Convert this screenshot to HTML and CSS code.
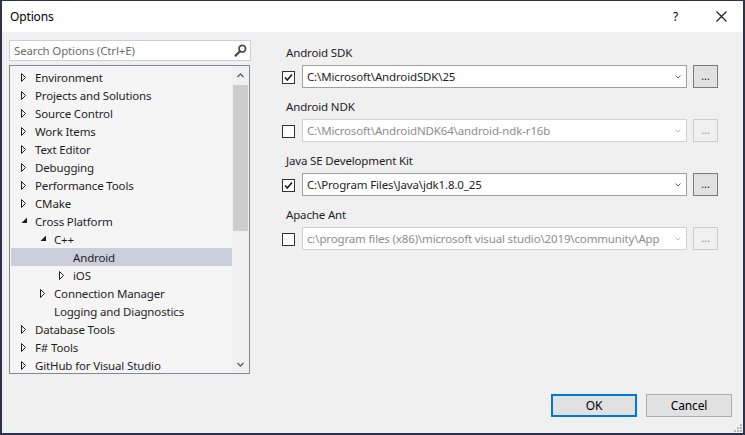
FILE: index.html
```html
<!DOCTYPE html>
<html>
<head>
<meta charset="utf-8">
<link rel="stylesheet" href="styles.css">
</head>
<body>
<div class="window">
  <div class="titlebar">
    <span class="title">Options</span>
    <span class="help">?</span>
    <span class="close"><svg width="11" height="11" viewBox="0 0 11 11"><path d="M0.5 0.5 L10.5 10.5 M10.5 0.5 L0.5 10.5" stroke="#1a1a1a" stroke-width="1.1" fill="none"/></svg></span>
  </div>
  <div class="content">
    <div class="left">
      <div class="search">
        <span class="placeholder">Search Options (Ctrl+E)</span>
        <svg class="search-icon" width="13" height="13" viewBox="0 0 13 13"><circle cx="8.3" cy="4.7" r="3.3" stroke="#4a4a4a" stroke-width="1.7" fill="none"/><path d="M6 7.2 L1.6 11.6" stroke="#4a4a4a" stroke-width="2.2" stroke-linecap="round"/></svg>
      </div>
      <div class="tree">
        <div class="rows">
          <div class="row l0"><svg class="exp" width="6" height="9" viewBox="0 0 6 9"><path d="M0.5 0.5 L4.5 4.5 L0.5 8.5 Z" fill="none" stroke="#1e1e1e"/></svg><span>Environment</span></div>
          <div class="row l0"><svg class="exp" width="6" height="9" viewBox="0 0 6 9"><path d="M0.5 0.5 L4.5 4.5 L0.5 8.5 Z" fill="none" stroke="#1e1e1e"/></svg><span>Projects and Solutions</span></div>
          <div class="row l0"><svg class="exp" width="6" height="9" viewBox="0 0 6 9"><path d="M0.5 0.5 L4.5 4.5 L0.5 8.5 Z" fill="none" stroke="#1e1e1e"/></svg><span>Source Control</span></div>
          <div class="row l0"><svg class="exp" width="6" height="9" viewBox="0 0 6 9"><path d="M0.5 0.5 L4.5 4.5 L0.5 8.5 Z" fill="none" stroke="#1e1e1e"/></svg><span>Work Items</span></div>
          <div class="row l0"><svg class="exp" width="6" height="9" viewBox="0 0 6 9"><path d="M0.5 0.5 L4.5 4.5 L0.5 8.5 Z" fill="none" stroke="#1e1e1e"/></svg><span>Text Editor</span></div>
          <div class="row l0"><svg class="exp" width="6" height="9" viewBox="0 0 6 9"><path d="M0.5 0.5 L4.5 4.5 L0.5 8.5 Z" fill="none" stroke="#1e1e1e"/></svg><span>Debugging</span></div>
          <div class="row l0"><svg class="exp" width="6" height="9" viewBox="0 0 6 9"><path d="M0.5 0.5 L4.5 4.5 L0.5 8.5 Z" fill="none" stroke="#1e1e1e"/></svg><span>Performance Tools</span></div>
          <div class="row l0"><svg class="exp" width="6" height="9" viewBox="0 0 6 9"><path d="M0.5 0.5 L4.5 4.5 L0.5 8.5 Z" fill="none" stroke="#1e1e1e"/></svg><span>CMake</span></div>
          <div class="row l0"><svg class="exp" width="6" height="9" viewBox="0 0 6 9"><path d="M6 0.5 L6 6 L0.5 6 Z" fill="#1e1e1e"/></svg><span>Cross Platform</span></div>
          <div class="row l1"><svg class="exp" width="6" height="9" viewBox="0 0 6 9"><path d="M6 0.5 L6 6 L0.5 6 Z" fill="#1e1e1e"/></svg><span>C++</span></div>
          <div class="row l2 selected"><span class="noexp"></span><span>Android</span></div>
          <div class="row l2"><svg class="exp" width="6" height="9" viewBox="0 0 6 9"><path d="M0.5 0.5 L4.5 4.5 L0.5 8.5 Z" fill="none" stroke="#1e1e1e"/></svg><span>iOS</span></div>
          <div class="row l1"><svg class="exp" width="6" height="9" viewBox="0 0 6 9"><path d="M0.5 0.5 L4.5 4.5 L0.5 8.5 Z" fill="none" stroke="#1e1e1e"/></svg><span>Connection Manager</span></div>
          <div class="row l1"><span class="noexp"></span><span>Logging and Diagnostics</span></div>
          <div class="row l0"><svg class="exp" width="6" height="9" viewBox="0 0 6 9"><path d="M0.5 0.5 L4.5 4.5 L0.5 8.5 Z" fill="none" stroke="#1e1e1e"/></svg><span>Database Tools</span></div>
          <div class="row l0"><svg class="exp" width="6" height="9" viewBox="0 0 6 9"><path d="M0.5 0.5 L4.5 4.5 L0.5 8.5 Z" fill="none" stroke="#1e1e1e"/></svg><span>F# Tools</span></div>
          <div class="row l0"><svg class="exp" width="6" height="9" viewBox="0 0 6 9"><path d="M0.5 0.5 L4.5 4.5 L0.5 8.5 Z" fill="none" stroke="#1e1e1e"/></svg><span>GitHub for Visual Studio</span></div>
        </div>
        <div class="scrollbar">
          <div class="sb-btn up"><svg width="7" height="5" viewBox="0 0 7 5"><path d="M0.5 4 L3.5 1 L6.5 4" stroke="#606060" stroke-width="1.4" fill="none"/></svg></div>
          <div class="thumb"></div>
          <div class="track"></div>
          <div class="sb-btn down"><svg width="7" height="5" viewBox="0 0 7 5"><path d="M0.5 1 L3.5 4 L6.5 1" stroke="#606060" stroke-width="1.4" fill="none"/></svg></div>
        </div>
      </div>
    </div>
    <div class="right">
      <div class="group">
        <div class="label">Android SDK</div>
        <div class="field">
          <span class="check"><svg width="11" height="11" viewBox="0 0 11 11"><path d="M2 5.5 L4.3 8 L9 2.5" stroke="#1e1e1e" stroke-width="1.6" fill="none"/></svg></span>
          <div class="combo"><span class="val">C:\Microsoft\AndroidSDK\25</span><svg class="chev" width="6" height="4" viewBox="0 0 6 4"><path d="M0.5 0.5 L3 3 L5.5 0.5" stroke="#606060" fill="none"/></svg></div>
          <div class="browse">...</div>
        </div>
      </div>
      <div class="group disabled">
        <div class="label">Android NDK</div>
        <div class="field">
          <span class="check"></span>
          <div class="combo"><span class="val">C:\Microsoft\AndroidNDK64\android-ndk-r16b</span><svg class="chev" width="6" height="4" viewBox="0 0 6 4"><path d="M0.5 0.5 L3 3 L5.5 0.5" stroke="#c0c0c0" fill="none"/></svg></div>
          <div class="browse">...</div>
        </div>
      </div>
      <div class="group">
        <div class="label">Java SE Development Kit</div>
        <div class="field">
          <span class="check"><svg width="11" height="11" viewBox="0 0 11 11"><path d="M2 5.5 L4.3 8 L9 2.5" stroke="#1e1e1e" stroke-width="1.6" fill="none"/></svg></span>
          <div class="combo"><span class="val">C:\Program Files\Java\jdk1.8.0_25</span><svg class="chev" width="6" height="4" viewBox="0 0 6 4"><path d="M0.5 0.5 L3 3 L5.5 0.5" stroke="#606060" fill="none"/></svg></div>
          <div class="browse">...</div>
        </div>
      </div>
      <div class="group disabled">
        <div class="label">Apache Ant</div>
        <div class="field">
          <span class="check"></span>
          <div class="combo"><span class="val">c:\program files (x86)\microsoft visual studio\2019\community\App</span><svg class="chev" width="6" height="4" viewBox="0 0 6 4"><path d="M0.5 0.5 L3 3 L5.5 0.5" stroke="#c0c0c0" fill="none"/></svg></div>
          <div class="browse">...</div>
        </div>
      </div>
    </div>
  </div>
  <div class="footer">
    <div class="btn default">OK</div>
    <div class="btn">Cancel</div>
  </div>
  <svg class="grip" width="8" height="8" viewBox="0 0 8 8"><g fill="#b5b5b5"><rect x="6" y="0" width="2" height="2"/><rect x="3" y="3" width="2" height="2"/><rect x="6" y="3" width="2" height="2"/><rect x="0" y="6" width="2" height="2"/><rect x="3" y="6" width="2" height="2"/><rect x="6" y="6" width="2" height="2"/></g></svg>
</div>
</body>
</html>
```
FILE: styles.css
```css
* { box-sizing: border-box; }
html, body { margin: 0; padding: 0; }
body {
  font-family: "Noto Sans", "DejaVu Sans", sans-serif;
  font-size: 11.5px;
  letter-spacing: -0.15px;
  color: #1e1e1e;
  background: #2f3049;
}
.window {
  position: relative;
  width: 745px;
  height: 435px;
  background: #f0f0f0;
  border-style: solid;
  border-color: #2f3049;
  border-width: 1px 2px 2px 2px;
  display: flex;
  flex-direction: column;
}
.titlebar {
  height: 31px;
  background: #ffffff;
  display: flex;
  align-items: center;
  padding-left: 8px;
}
.title { flex: 1; font-size: 12px; color: #000; }
.help { width: 20px; font-size: 12px; color: #000; margin-right: 23px; }
.close { width: 11px; height: 11px; margin-right: 16px; display: flex; }
.content {
  display: flex;
  padding: 8px 0 0 7px;
  height: 342px;
}
.left { width: 242px; display: flex; flex-direction: column; }
.search {
  height: 21px;
  background: #fff;
  border: 1px solid #cccedb;
  display: flex;
  align-items: center;
  padding: 0 3px 0 4px;
}
.placeholder { flex: 1; color: #6d6d6d; }
.search-icon { display: block; }
.tree {
  margin-top: 4px;
  width: 241px;
  height: 309px;
  border: 1px solid #828790;
  background: #f5f5f5;
  display: flex;
}
.rows { flex: 1; padding: 2px 0 0 1px; }
.row {
  height: 18px;
  display: flex;
  align-items: center;
  white-space: nowrap;
}
.row .exp, .row .noexp { width: 6px; height: 9px; margin-right: 8px; display: block; flex: none; }
.row.l0 { padding-left: 10px; }
.row.l1 { padding-left: 29px; }
.row.l2 { padding-left: 48px; }
.row.selected { background: #cccedb; }
.scrollbar {
  width: 17px;
  display: flex;
  flex-direction: column;
  background: #f0f0f0;
}
.sb-btn { height: 19px; display: flex; align-items: center; justify-content: center; }
.sb-btn.down { height: 18px; }
.thumb { height: 146px; background: #cdcdcd; margin: 0 1px; }
.track { flex: 1; }
.right { margin-left: 31px; margin-top: 4px; }
.group { margin-bottom: 10px; }
.label { height: 18px; line-height: 18px; padding-left: 4px; margin-bottom: 3px; }
.field { display: flex; align-items: center; height: 23px; }
.check {
  width: 13px; height: 13px;
  border: 1px solid #333;
  background: #fff;
  margin-right: 7px;
  display: flex; align-items: center; justify-content: center;
  margin-top: 1px;
}
.check svg { display: block; }
.combo {
  width: 385px; height: 23px;
  border: 1px solid #a0a0a0;
  background: #fff;
  display: flex;
  align-items: center;
  padding: 0 5px 0 4px;
}
.val { flex: 1; white-space: nowrap; overflow: hidden; }
.chev { display: block; }
.browse {
  width: 25px; height: 23px;
  margin-left: 6px;
  border: 1px solid #7a7a7a;
  background: #e1e1e1;
  display: flex; align-items: center; justify-content: center;
  font-size: 11px;
  padding-bottom: 2px;
}
.disabled .combo { border-color: #d0d0d0; color: #8d8d8d; }
.disabled .browse { border-color: #cccccc; background: #f0f0f0; color: #8d8d8d; }
.disabled .check { border-color: #333; }
.footer {
  display: flex;
  justify-content: flex-end;
  gap: 9px;
  padding: 20px 11px 0 0;
}
.btn {
  width: 86px; height: 23px;
  background: #e1e1e1;
  border: 1px solid #adadad;
  display: flex; align-items: center; justify-content: center;
  color: #000;
  font-size: 12px;
}
.btn.default { border: 2px solid #0078d7; }
.grip { position: absolute; right: 1px; bottom: 1px; display: block; }
```
